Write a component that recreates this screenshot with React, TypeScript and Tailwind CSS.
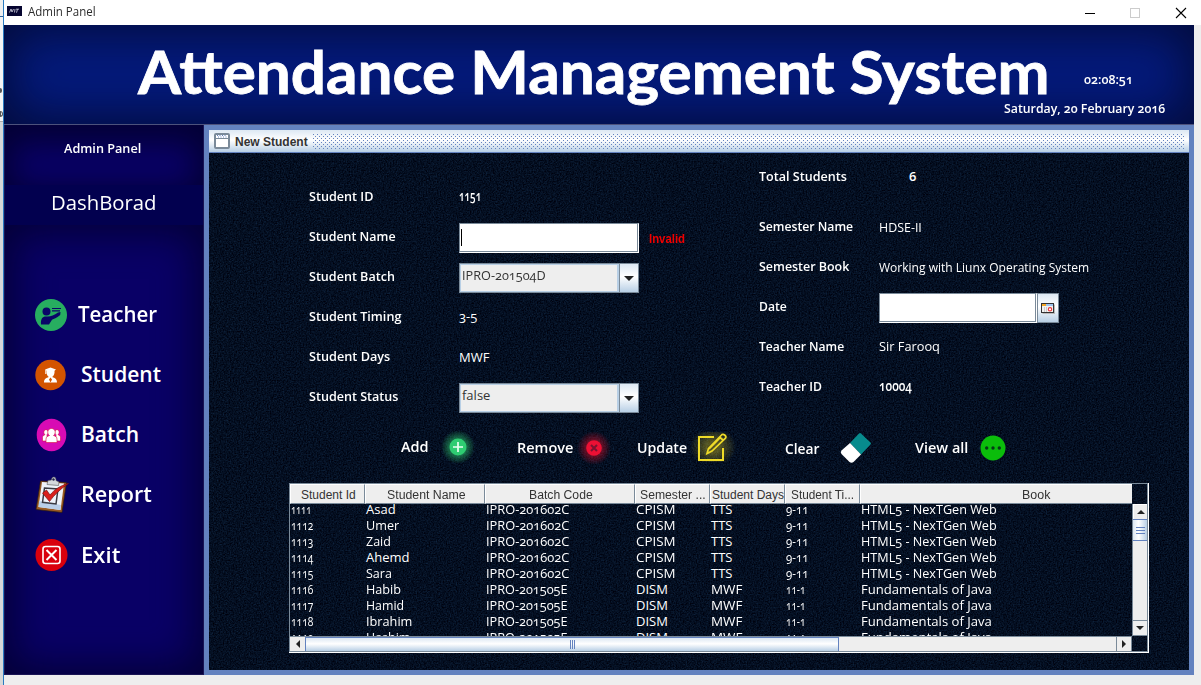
import React, { useLayoutEffect, useRef, useState } from "react";

/* Text squeezed or stretched horizontally so that it is exactly w pixels wide. */
function Fit({ w, className = "", children }: { w: number; className?: string; children: React.ReactNode }) {
  const ref = useRef<HTMLSpanElement>(null);
  const [scale, setScale] = useState(1);
  useLayoutEffect(() => {
    if (ref.current) setScale(w / ref.current.offsetWidth);
  }, [w]);
  return (
    <span className={`block shrink-0 whitespace-nowrap ${className}`} style={{ width: w }}>
      <span ref={ref} className="inline-block origin-left" style={{ transform: `scaleX(${scale})` }}>
        {children}
      </span>
    </span>
  );
}

function Noise() {
  return (
    <svg className="absolute inset-0 h-full w-full" aria-hidden="true">
      <filter id="grain" x="0" y="0" width="100%" height="100%" colorInterpolationFilters="sRGB">
        <feTurbulence type="fractalNoise" baseFrequency="0.7" numOctaves="2" seed="4" />
        <feColorMatrix values="0.10 0 0 0 -0.034  0.20 0 0 0 -0.042  0.28 0 0 0 -0.010  0 0 0 0 1" />
      </filter>
      <rect width="100%" height="100%" filter="url(#grain)" />
    </svg>
  );
}

const steel = "bg-[linear-gradient(180deg,#dde8f3_0%,#ffffff_45%,#b8cfe5_100%)]";

function TitleBar() {
  return (
    <div className="flex h-[25px] w-full items-center bg-white pl-[3px]">
      <svg width="15" height="10" viewBox="0 0 15 10" className="mb-[3px]">
        <rect width="15" height="10" fill="#060530" />
        <path d="M2.5 6.5l1.5-3.5 1 3 1.500-3M8 3l-.5 3.500M9 3.200h3M10.500 3.200l-1 3.500" stroke="#d8d8e6" strokeWidth=".8" fill="none" />
      </svg>
      <Fit w={68} className="-mt-[2px] ml-[6px] text-[12px] leading-[16px] text-[#2b2b2b]">Admin Panel</Fit>
      <svg width="110" height="16" viewBox="0 0 110 16" className="ml-auto mr-[8px] shrink-0" fill="none">
        <path d="M2 8.500h10" stroke="#000" />
        <rect x="47.500" y="3.500" width="9" height="9" stroke="#ccc" />
        <path d="M93 3l10 10M103 3l-10 10" stroke="#000" strokeWidth="1.100" />
      </svg>
    </div>
  );
}

function Header() {
  return (
    <div className="flex h-[100px] w-[1190px] items-start border-b border-[#4d527c] bg-[#041a7b] pl-[134px] shadow-[inset_0_0_48px_8px_#030c3d]">
      <Fit w={912} className="mt-[8px] font-[Lato] text-[60px] leading-[76px] font-bold [-webkit-text-stroke:0.8px_white] [font-feature-settings:'liga']">
        Attendance Management System
      </Fit>
      <div className="-ml-[46px] flex flex-col pt-[45px] text-[13px] font-semibold leading-[18px]">
        <Fit w={49} className="ml-[80px]">02:08:51</Fit>
        <Fit w={161} className="mt-[11px]">Saturday, 20 February 2016</Fit>
      </div>
    </div>
  );
}

function TeacherIcon() {
  return (
    <svg width="34" height="34" viewBox="0 0 34 34">
      <circle cx="17" cy="17" r="16" fill="#27ae60" />
      <circle cx="12.500" cy="13.500" r="4" fill="#0a0568" />
      <path d="M7 26.500c-.5-6.500 2-8.500 6-8 3 .3 7-1 11-4l2.500-.5-.3 3c-4 3-6.200 4-8.200 4.700l-3 4.800z" fill="#0a0568" />
      <path d="M18 10.500h9M18 12.800h8" stroke="#0a0568" strokeWidth="1.200" />
    </svg>
  );
}
function StudentIcon() {
  return (
    <svg width="34" height="34" viewBox="0 0 34 34">
      <circle cx="16.500" cy="17" r="15.200" fill="#d35400" />
      <path d="M11 11.500l5.500-2 5.500 2-1.500 1.300c.4 3-.8 5.200-2.300 6.200 2.800 1 4.800 2 4.800 5.500H10c0-3.500 2-4.500 4.800-5.500-1.500-1-2.700-3.200-2.300-6.200z" fill="#fff" />
      <path d="M16.500 19.500l-1.500 2 1.500 3 1.500-3z" fill="#d35400" />
      <path d="M11.800 12v4" stroke="#fff" />
    </svg>
  );
}
function BatchIcon() {
  return (
    <svg width="34" height="34" viewBox="0 0 34 34">
      <ellipse cx="17.500" cy="17" rx="14.800" ry="16.200" fill="#d80bb4" />
      <g fill="#fff" stroke="#d8103c" strokeWidth=".6">
        <path d="M8.500 23v-3.500c0-1.500 1-2.300 2.500-2.800-2-1.500-1.200-5 1-5s3 3.500 1 5V23zM26.500 23v-3.500c0-1.500-1-2.300-2.500-2.800 2-1.500 1.200-5-1-5s-3 3.500-1 5V23z" />
        <path d="M12 24.500V21c0-2 1.500-2.800 3.500-3.500-2.800-2-2-7 2-7s4.800 5 2 7c2 .7 3.500 1.500 3.500 3.500v3.500z" />
      </g>
    </svg>
  );
}
function ReportIcon() {
  return (
    <svg width="36" height="38" viewBox="0 0 36 38" className="shrink-0">
      <path d="M6.500 5l26 1.500-4.500 30L2 33.500z" fill="#9a5a22" stroke="#2c1b10" strokeWidth=".7" />
      <path d="M8 6l22 1.500-3.500 26.500L4.500 31z" fill="#eef3fa" />
      <path d="M5 25l22 4-.7 5L4.500 31z" fill="#b9cfe8" />
      <path d="M10.500 12l13.500 1-2 15-13.500-1.700z" fill="none" stroke="#3a3a42" strokeWidth="1.500" />
      <path d="M13 8.500l1-4 3.500-.5c0-4 5-4 4.500.5l3 1.500-.5 3.500z" fill="#d5d9de" stroke="#555" strokeWidth=".6" />
      <circle cx="19.500" cy="3.500" r="1.200" fill="#26264a" />
      <path d="M8.500 17l4-3 3.500 5c4-5 10-9.500 18.500-11.500C27 12.500 20 19 15.500 25.500z" fill="#d91f1c" stroke="#77100f" strokeWidth=".7" />
    </svg>
  );
}
function ExitIcon() {
  return (
    <svg width="34" height="34" viewBox="0 0 34 34" fill="none">
      <circle cx="17.500" cy="17" r="16" fill="#d9000d" />
      <rect x="9" y="8.500" width="17" height="17" rx="2.500" stroke="#fff" strokeWidth="1.600" />
      <path d="M12.500 12l10 10M22.500 12l-10 10" stroke="#fff" strokeWidth="2" />
    </svg>
  );
}

const nav = [
  { label: "Teacher", w: 79, icon: <TeacherIcon />, pad: "pl-[10px]" },
  { label: "Student", w: 80, icon: <StudentIcon />, pad: "pl-[13px]" },
  { label: "Batch", w: 58, icon: <BatchIcon />, pad: "pl-[13px]" },
  { label: "Report", w: 71, icon: <ReportIcon />, pad: "pl-[11px]" },
  { label: "Exit", w: 39, icon: <ExitIcon />, pad: "pl-[13px]" },
];

function Sidebar() {
  return (
    <div className="flex h-[550px] w-[200px] flex-col border-x border-b border-[#191454] bg-[#090066]">
      <div className="h-[60px] pl-[59px] pt-[13px] text-[13px] font-semibold leading-[20px] shadow-[inset_0_10px_30px_8px_#040036]">
        <Fit w={77}>Admin Panel</Fit>
      </div>
      <div className="h-[40px] bg-[#02004f] pl-[46px] pt-[2px] text-[20.5px] leading-[30px]">
        <Fit w={106}>DashBorad</Fit>
      </div>
      <div className="flex flex-1 flex-col pt-[60px] shadow-[inset_0_0_38px_8px_#040036]">
        {nav.map((n) => (
          <div key={n.label} className="flex h-[60px] items-center pl-[29px]">
            {n.icon}
            <Fit w={n.w} className={`text-[21px] leading-[28px] font-semibold ${n.label === "Exit" ? "" : "-mt-[2px]"} ${n.pad}`}>{n.label}</Fit>
          </div>
        ))}
      </div>
    </div>
  );
}

function FrameTitle() {
  return (
    <div className={`flex h-[23px] items-center rounded-t-[1px] border-b border-[#6382bf] pl-[5px] pr-[5px] ${steel}`}>
      <svg width="16" height="16" viewBox="0 0 16 16" className="shrink-0">
        <rect x="1" y="1" width="14" height="14" rx="1" fill="#fff" stroke="#7a8a99" strokeWidth="2" />
        <path d="M2 5.500h12" stroke="#7a8a99" />
        <path d="M3 2.500h10M4 4h10" stroke="#6382bf" strokeDasharray="1 1.500" />
      </svg>
      <Fit w={73} className="ml-[5px] pt-[2px] font-['Liberation_Sans'] text-[12px] font-bold leading-[16px] text-[#333]">New Student</Fit>
      <div className="ml-[5px] h-[15px] flex-1 bg-[radial-gradient(circle_at_0.5px_0.5px,#6382bf_0.6px,transparent_0.8px),radial-gradient(circle_at_2.5px_2.5px,#6382bf_0.6px,transparent_0.8px)] bg-[length:4px_4px]" />
    </div>
  );
}

function Combo({ text, w }: { text: string; w: number }) {
  return (
    <div className="flex h-[30px] w-[180px] border border-[#7a8a99]">
      <div className="flex-1 border border-r-2 border-[#b8cfe5] bg-[#eee] pl-[1px] pt-[1px] text-[13px] leading-[19px] text-[#333]">
        <Fit w={w}>{text}</Fit>
      </div>
      <div className={`flex w-[19px] items-center justify-center border-l border-[#7a8a99] ${steel}`}>
        <svg width="10" height="5" viewBox="0 0 10 5"><path d="M0 0h10L5 5z" fill="#222" /></svg>
      </div>
    </div>
  );
}

function Row({ label, lw, lab, children }: { label: string; lw: number; lab: string; children?: React.ReactNode }) {
  return (
    <div className="flex h-[40px] items-center">
      <div className={`-mt-[2px] shrink-0 text-[13px] font-semibold leading-[18px] ${lab}`}>
        <Fit w={lw}>{label}</Fit>
      </div>
      {children}
    </div>
  );
}

function Form() {
  const left = "w-[150px]";
  const right = "w-[120px]";
  return (
    <div className="flex pl-[100px]">
      <div className="w-[450px] pt-[24px]">
        <Row label="Student ID" lw={64} lab={left}><Fit w={22} className="-mt-[1px] text-[13.5px] font-semibold">1151</Fit></Row>
        <Row label="Student Name" lw={87} lab={left}>
          <div className="flex h-[30px] w-[180px] border border-white border-l-[#7a8a99] border-t-[#7a8a99] mt-[2px]">
            <div className="flex-1 border-b border-r border-[#7a8a99] bg-white pl-[1px] pt-[5px]">
              <div className="h-[17px] w-px bg-black" />
            </div>
          </div>
          <Fit w={36} className="ml-[10px] pt-[4px] font-['Liberation_Sans'] text-[12px] font-bold text-[#f00000]">Invalid</Fit>
        </Row>
        <Row label="Student Batch" lw={86} lab={left}><div className="pt-[2px]"><Combo text="IPRO-201504D" w={84} /></div></Row>
        <Row label="Student Timing" lw={92} lab={left}><Fit w={18} className="text-[13px]">3-5</Fit></Row>
        <Row label="Student Days" lw={81} lab={left}><Fit w={30} className="pt-[1px] text-[13px]">MWF</Fit></Row>
        <Row label="Student Status" lw={89} lab={left}><div className="pt-[2px]"><Combo text="false" w={28} /></div></Row>
      </div>
      <div className="pt-[4px]">
        <Row label="Total Students" lw={88} lab="w-[150px]"><Fit w={7} className="text-[13px] font-semibold">6</Fit></Row>
        <div className="h-[10px]" />
        <Row label="Semester Name" lw={94} lab={right}><Fit w={43} className="pt-[2px] text-[13px]">HDSE-II</Fit></Row>
        <Row label="Semester Book" lw={90} lab={right}><Fit w={210} className="pt-[2px] text-[13px]">Working with Liunx Operating System</Fit></Row>
        <Row label="Date" lw={28} lab={right}>
          <div className="mt-[2px] flex h-[30px] w-[158px] border border-white border-l-[#7a8a99] border-t-[#7a8a99]">
            <div className="flex-1 border-b border-r border-[#7a8a99] bg-white" />
          </div>
          <div className={`mt-[2px] flex h-[30px] w-[22px] items-center justify-center border border-[#7a8a99] ${steel}`}>
            <svg width="14" height="11" viewBox="0 0 14 11">
              <rect x="1.500" y="1.500" width="12.500" height="9.500" fill="#b9b9b9" />
              <rect x=".5" y=".5" width="12" height="9" fill="#f2f2f2" stroke="#333" />
              <rect x="1" y="1" width="4" height="2" fill="#f5a623" />
              <rect x="5" y="1" width="7" height="2" fill="#9ec4ee" />
              <path d="M3.500 4v5M5.500 4v5" stroke="#ccc" />
              <circle cx="9" cy="6.300" r="1.700" fill="#fff" stroke="#e33" strokeWidth="1.100" />
            </svg>
          </div>
        </Row>
        <Row label="Teacher Name" lw={85} lab={right}><Fit w={61} className="text-[13px]">Sir Farooq</Fit></Row>
        <Row label="Teacher ID" lw={63} lab={right}><Fit w={33} className="-mt-[1px] text-[13.5px] font-semibold">10004</Fit></Row>
      </div>
    </div>
  );
}

function Actions() {
  const t = "text-[15px] leading-[20px] font-semibold";
  return (
    <div className="mt-[9px] flex h-[44px] items-center pl-[192px]">
      <Fit w={28} className={`${t} -mt-[4px]`}>Add</Fit>
      <svg width="36" height="32" viewBox="0 0 36 32" className="-mt-[2px] ml-[11px]">
        <defs><radialGradient id="gl"><stop offset=".4" stopColor="#2ecc71" stopOpacity=".6" /><stop offset="1" stopColor="#2ecc71" stopOpacity="0" /></radialGradient></defs>
        <circle cx="18" cy="16" r="17" fill="url(#gl)" />
        <circle cx="18" cy="16" r="8.500" fill="#2ecc71" />
        <path d="M18 11v10M13 16h10" stroke="#eafff2" strokeWidth="1.700" />
      </svg>
      <Fit w={56} className={`${t} -mt-[2px] ml-[41px]`}>Remove</Fit>
      <svg width="36" height="32" viewBox="0 0 36 32" className="ml-[3px]">
        <defs><radialGradient id="rl"><stop offset=".4" stopColor="#e5112d" stopOpacity=".5" /><stop offset="1" stopColor="#e5112d" stopOpacity="0" /></radialGradient></defs>
        <circle cx="18" cy="16" r="17" fill="url(#rl)" />
        <circle cx="18" cy="16" r="7.800" fill="#ec1034" />
        <path d="M15 13l6 6M21 13l-6 6" stroke="#7c1230" strokeWidth="2" />
      </svg>
      <Fit w={50} className={`${t} -mt-[2px] ml-[25px]`}>Update</Fit>
      <svg width="46" height="30" viewBox="0 0 46 30" className="-mt-[2px] ml-[3px]" fill="none" stroke="#efdb28" strokeWidth="2">
        <defs><radialGradient id="yl"><stop offset=".3" stopColor="#efdb28" stopOpacity=".35" /><stop offset="1" stopColor="#efdb28" stopOpacity="0" /></radialGradient></defs>
        <ellipse cx="23" cy="15" rx="23" ry="20" fill="url(#yl)" stroke="none" />
        <path d="M24 5H9v23h24V16" />
        <path d="M18.500 16.500L31.500 3c1.500-2 5.500 1 4 3.200L22 19l-5 2.500zM29.500 5l4 3.500M19 17l12-12" strokeWidth="1.700" />
      </svg>
      <Fit w={35} className={`${t} ml-[49px]`}>Clear</Fit>
      <svg width="32" height="32" viewBox="0 0 32 32" className="ml-[20px]">
        <path d="M10 11L19 1.500q1-1 2 0l9.500 9q1 1 0 2L21 22.500z" fill="#078b8d" />
        <path d="M10 11L21 22.500l-7.500 7.500q-2 1.500-4 0L1.500 22q-1.500-2 0-3.500z" fill="#fff" />
      </svg>
      <Fit w={53} className={`${t} -mt-[2px] ml-[43px]`}>View all</Fit>
      <svg width="26" height="26" viewBox="0 0 26 26" className="ml-[12px]">
        <circle cx="13" cy="13" r="12.500" fill="#0bbd0b" />
        <g fill="#053a17"><circle cx="6.700" cy="13" r="1.700" /><circle cx="13" cy="13" r="1.700" /><circle cx="19.300" cy="13" r="1.700" /></g>
      </svg>
    </div>
  );
}

const cols = "grid grid-cols-[75px_120px_150px_75px_75px_75px_272px]";
const heads: [string, number, string][] = [
  ["Student Id", 55, "pl-[10px]"], ["Student Name", 79, "pl-[21px]"], ["Batch Code", 64, "pl-[43px]"],
  ["Semester ...", 66, "pl-[4px]"], ["Student Days", 72, "pl-[1px]"], ["Student Ti...", 63, "pl-[5px]"], ["Book", 28, "pl-[161px]"],
];
const ht = "HTML5 - NexTGen Web";
const fj = "Fundamentals of Java";
const people: [string, string, number][] = [
  ["1111", "Asad", 30], ["1112", "Umer", 33], ["1113", "Zaid", 25], ["1114", "Ahemd", 43], ["1115", "Sara", 26],
  ["1116", "Habib", 35], ["1117", "Hamid", 38], ["1118", "Ibrahim", 46], ["1119", "Hashim", 44],
];

function Table() {
  return (
    <div className="ml-[80px] mt-[13px] h-[170px] w-[860px] border-b border-r border-white">
      <div className="flex h-full flex-col border border-[#7a8a99]">
        <div className={`${cols} h-[20px] w-[842px] shrink-0 font-['Liberation_Sans'] text-[12px] leading-[20px] text-[#333]`}>
          {heads.map(([h, w, p], i) => (
            <div key={h} className={`overflow-hidden border-b border-l border-t border-b-[#7a8a99] border-l-white border-t-white bg-[#eee] ${i < 6 ? "border-r border-r-[#7a8a99]" : ""} ${p}`}>
              <Fit w={w}>{h}</Fit>
            </div>
          ))}
        </div>
        <div className="flex h-[132px]">
          <div className="h-full w-[842px] overflow-hidden text-[13px] leading-[16px]">
            <div className="-mt-[3px]">
              {people.map(([id, name, nw], i) => (
                <div key={id} className={`${cols} h-[16px] pl-[1px]`}>
                  <Fit w={id === "1111" ? 20 : 22}>{id}</Fit>
                  <Fit w={nw}>{name}</Fit>
                  <Fit w={i < 5 ? 83 : 82}>{i < 5 ? "IPRO-201602C" : "IPRO-201505E"}</Fit>
                  <Fit w={i < 5 ? 39 : 32}>{i < 5 ? "CPISM" : "DISM"}</Fit>
                  <Fit w={i < 5 ? 21 : 31}>{i < 5 ? "TTS" : "MWF"}</Fit>
                  <Fit w={i < 5 ? 22 : 19}>{i < 5 ? "9-11" : "11-1"}</Fit>
                  <Fit w={i < 5 ? 136 : 131}>{i < 5 ? ht : fj}</Fit>
                </div>
              ))}
            </div>
          </div>
          <div className="flex w-[15px] flex-col border-l border-[#7a8a99] bg-[#eee]">
            <div className="flex h-[15px] items-center justify-center border-l border-t border-white">
              <svg width="8" height="4" viewBox="0 0 8 4"><path d="M0 4h8L4 0z" fill="#222" /></svg>
            </div>
            <div className="flex h-[22px] items-center justify-center border-y border-[#6382bf] bg-[linear-gradient(90deg,#dde8f3,#ffffff_40%,#b8cfe5)]">
              <div className="h-[7px] w-[9px] border-y border-[#6382bf] pt-[2px]"><div className="h-px bg-[#6382bf]" /></div>
            </div>
            <div className="flex-1" />
            <div className="flex h-[16px] items-center justify-center border-y border-[#7a8a99]">
              <svg width="8" height="4" viewBox="0 0 8 4"><path d="M0 0h8L4 4z" fill="#222" /></svg>
            </div>
          </div>
        </div>
        <div className="flex h-[15px] w-[842px] border-t border-[#7a8a99] bg-[#eee]">
          <div className="flex w-[16px] items-center justify-center border-r border-[#6382bf]">
            <svg width="4" height="8" viewBox="0 0 4 8"><path d="M4 0v8L0 4z" fill="#222" /></svg>
          </div>
          <div className={`flex w-[533px] items-center justify-center border-r border-t border-[#6382bf] ${steel}`}>
            <div className="flex h-[9px] w-[5px] justify-center border-x border-[#6382bf]"><div className="w-px bg-[#6382bf]" /></div>
          </div>
          <div className="flex-1" />
          <div className="flex w-[16px] items-center justify-center border-x border-[#7a8a99]">
            <svg width="4" height="8" viewBox="0 0 4 8"><path d="M0 0v8l4-4z" fill="#222" /></svg>
          </div>
        </div>
      </div>
    </div>
  );
}

export default function App() {
  return (
    <div className="flex h-[685px] w-[1201px] overflow-hidden bg-[#eee] font-['Open_Sans',sans-serif] text-white [font-feature-settings:'onum'] [font-stretch:92%]">
      <div className="flex h-full w-[4px] shrink-0 flex-col border-r border-[#2a7ac0] bg-[#d5d8d8]">
        <div className="h-[17px] border-b border-[#31619b] bg-[#efefef]" />
        <div className="h-[105px] border-b border-[#aaa] bg-[#f4f4f4] pt-[71px]">
          <div className="h-[5px] w-[2px] rounded-r bg-[#555]" />
          <div className="mt-[18px] h-[6px] w-[3px] rounded-r border border-[#555]" />
        </div>
      </div>
      <div className="flex flex-1 flex-col">
        <TitleBar />
        <Header />
        <div className="flex">
          <Sidebar />
          <div className="h-[550px] w-[990px] border-[5px] border-[#6382bf]">
            <FrameTitle />
            <div className="relative h-[517px] overflow-hidden bg-[#030d1f]">
              <Noise />
              <div className="relative">
                <Form />
                <Actions />
                <Table />
              </div>
            </div>
          </div>
        </div>
      </div>
    </div>
  );
}
